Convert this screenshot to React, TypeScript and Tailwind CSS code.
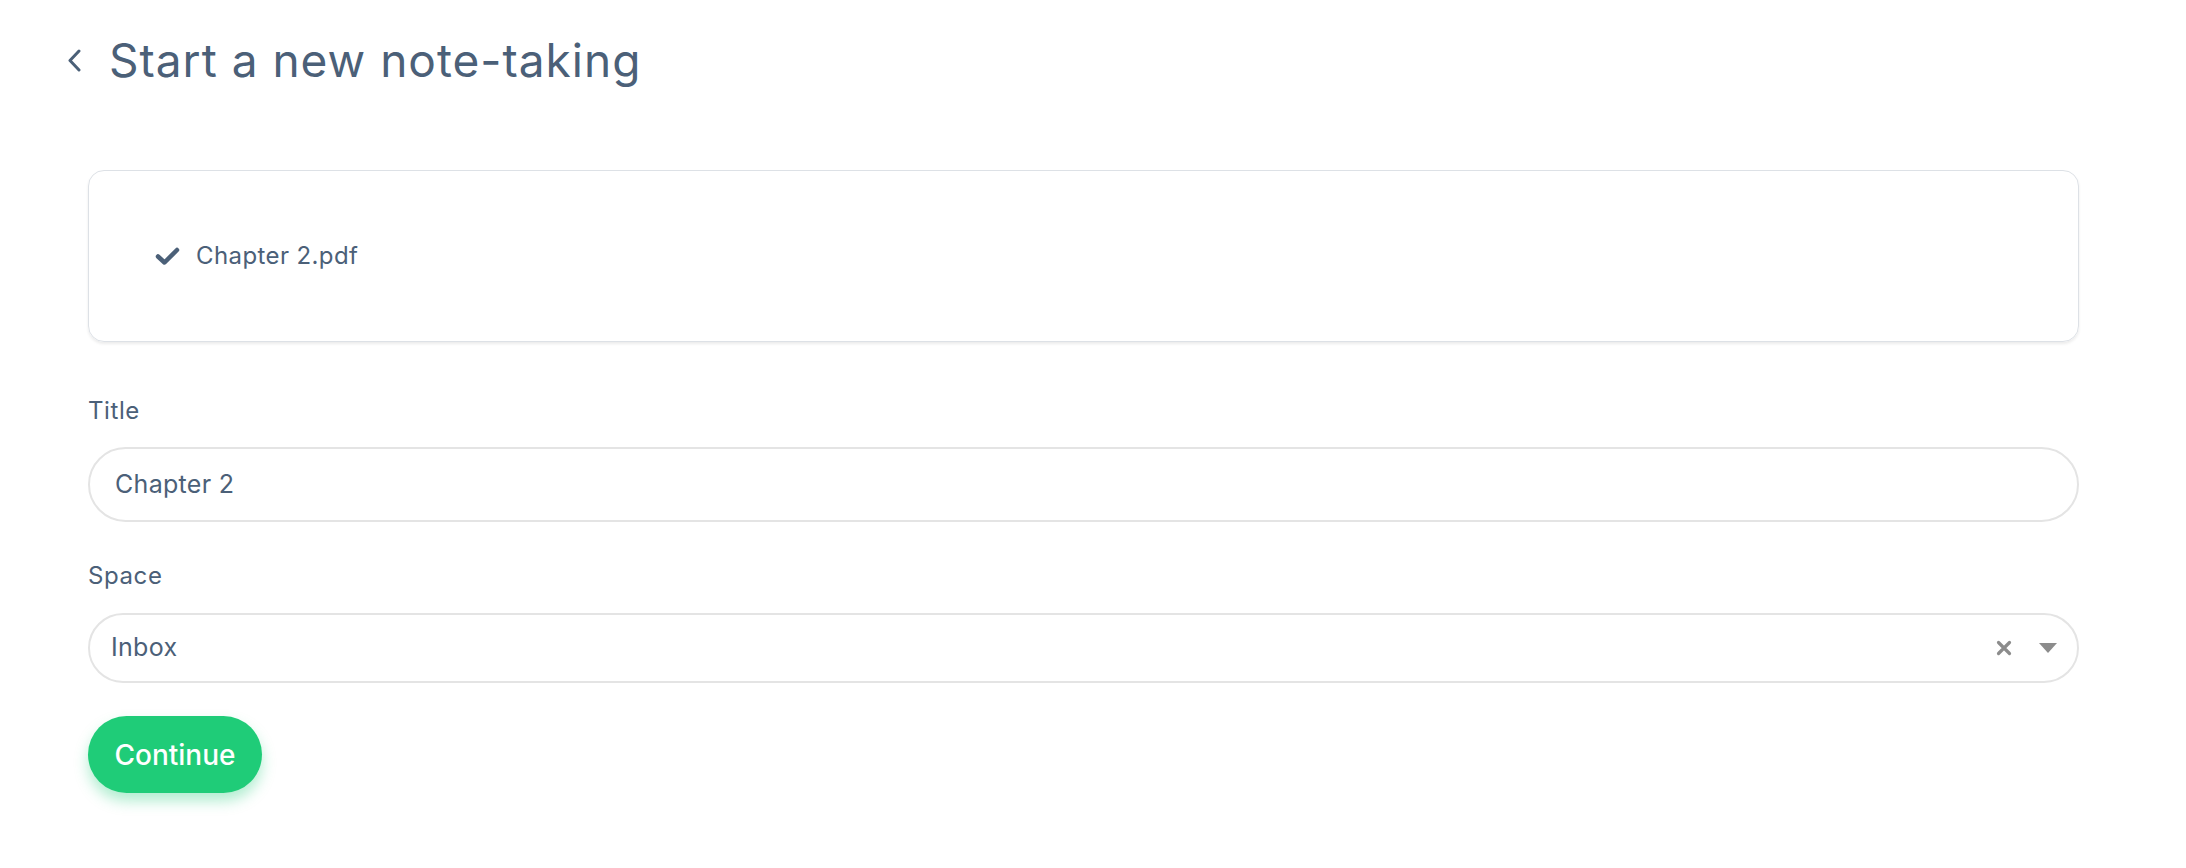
import React from "react";

export default function App() {
  return (
    <div className="w-full h-[868px] bg-white text-[#4b6078] overflow-hidden" style={{ fontFamily: "Inter, 'Noto Sans', sans-serif" }}>
      <div className="flex items-center h-[60px] mt-[30px] pl-[67px]">
        <svg width="15" height="23" viewBox="0 0 15 23" className="shrink-0">
          <polyline points="12,2 3,11.5 12,21" fill="none" stroke="#4b6078" strokeWidth="3" strokeLinecap="round" strokeLinejoin="round" />
        </svg>
        <h1 className="ml-[27px] text-[46px] leading-none font-normal tracking-[1px]">Start a new note-taking</h1>
      </div>

      <div className="ml-[88px] w-[1991px]">
        <div className="mt-[80px] h-[172px] rounded-[16px] border border-[#dde1e6] shadow-[0_2px_3px_rgba(0,0,0,0.08)] flex items-center pl-[66px]">
          <svg width="25" height="18" viewBox="0 0 25 18" className="shrink-0">
            <polyline points="3,9.5 9.5,15.5 22,3" fill="none" stroke="#4b6078" strokeWidth="4.5" strokeLinecap="round" strokeLinejoin="round" />
          </svg>
          <span className="ml-[16px] text-[24px] tracking-[0.4px]">Chapter 2.pdf</span>
        </div>

        <div className="mt-[54px] h-[30px] flex items-center text-[24px] tracking-[0.6px]">Title</div>
        <div className="mt-[21px] h-[75px] rounded-full border-2 border-[#e4e4e4] flex items-center pl-[25px] text-[25px] tracking-[0.3px]">
          Chapter 2
        </div>

        <div className="mt-[39px] h-[30px] flex items-center text-[24px] tracking-[0.6px]">Space</div>
        <div className="mt-[22px] h-[70px] rounded-full border-2 border-[#e4e4e4] flex items-center pl-[21px] pr-[20px] text-[25px] tracking-[0.3px]">
          <span className="flex-1">Inbox</span>
          <svg width="16" height="16" viewBox="0 0 16 16" className="shrink-0">
            <path d="M2.5 2.5 L13.5 13.5 M13.5 2.5 L2.5 13.5" stroke="#8c8c8c" strokeWidth="3.2" strokeLinecap="round" />
          </svg>
          <svg width="18" height="10" viewBox="0 0 18 10" className="shrink-0 ml-[27px]">
            <path d="M0 0 H18 L9 10 Z" fill="#8c8c8c" />
          </svg>
        </div>

        <button className="mt-[33px] w-[174px] h-[77px] rounded-full bg-[#1fcc78] text-white text-[28px] font-medium flex items-center justify-center shadow-[0_8px_14px_rgba(31,204,120,0.35)]">
          Continue
        </button>
      </div>
    </div>
  );
}
